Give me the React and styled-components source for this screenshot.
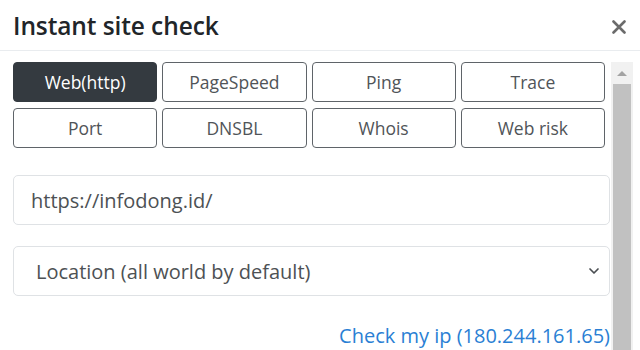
import styled, { createGlobalStyle } from 'styled-components'

const GlobalStyle = createGlobalStyle`
  html, body {
    margin: 0;
    padding: 0;
    background: #fff;
    overflow: hidden;
  }
  body {
    font-family: "Open Sans", "Noto Sans", Arial, sans-serif;
    color: #212529;
  }
`;

const Modal = styled.div`
  width: 640px;
  height: 350px;
  display: flex;
  flex-direction: column;
  overflow: hidden;
`;

const Header = styled.header`
  height: 50px;
  flex: none;
  display: flex;
  align-items: center;
  justify-content: space-between;
  padding: 0 13px 0 13px;
  border-bottom: 1px solid #e9ecef;
`;

const Title = styled.h1`
  margin: 0;
  font-size: 24.5px;
  font-weight: 600;
  color: #212529;
  letter-spacing: -0.1px;
`;

const Close = styled.button`
  border: 0;
  background: none;
  padding: 0;
  width: 16px;
  height: 16px;
  margin-top: 4px;
  display: flex;
  align-items: center;
  justify-content: center;
  cursor: pointer;
`;

const Body = styled.div`
  flex: 1;
  display: flex;
  padding-top: 11px;
  min-height: 0;
`;

const Content = styled.div`
  width: 610px;
  padding-left: 13px;
  box-sizing: border-box;
  display: flex;
  flex-direction: column;
`;

const Tabs = styled.div`
  display: grid;
  grid-template-columns: repeat(4, 1fr);
  column-gap: 5px;
  row-gap: 6px;
  width: 592px;
`;

const Tab = styled.button`
  height: 40px;
  border-radius: 4px;
  border: 1px solid ${({ $active }) => ($active ? '#343a40' : '#5f6469')};
  background: ${({ $active }) => ($active ? '#343a40' : '#fff')};
  color: ${({ $active }) => ($active ? '#fff' : '#505458')};
  font-family: inherit;
  font-size: 17.5px;
  padding: 0;
  cursor: pointer;
`;

const Field = styled.div`
  height: 50px;
  box-sizing: border-box;
  margin-top: ${({ $gap }) => $gap}px;
  border: 1px solid #dfe2e5;
  border-radius: 5px;
  display: flex;
  align-items: center;
  justify-content: space-between;
  padding: 0 8px 0 ${({ $pad }) => $pad}px;
  font-size: 20px;
  color: #4d5154;
`;

const Link = styled.a`
  align-self: flex-end;
  margin-top: 26px;
  font-size: 20px;
  color: #2a7fd4;
  text-decoration: none;
`;

const Scrollbar = styled.div`
  width: 22px;
  margin-left: 1px;
  background: #f1f1f1;
  display: flex;
  flex-direction: column;
  align-items: center;
`;

const ArrowUp = styled.div`
  height: 22px;
  display: flex;
  align-items: center;
  justify-content: center;
`;

const Thumb = styled.div`
  flex: 1;
  width: 18px;
  background: #c1c1c1;
`;

const tabs = ['Web(http)', 'PageSpeed', 'Ping', 'Trace', 'Port', 'DNSBL', 'Whois', 'Web risk'];

export default function App() {
  return (
    <Modal>
      <GlobalStyle />
      <Header>
        <Title>Instant site check</Title>
        <Close aria-label="Close">
          <svg width="14" height="14" viewBox="0 0 14 14">
            <path d="M1.5 1.5 L12.5 12.5 M12.5 1.5 L1.5 12.5" stroke="#6b6b6b" strokeWidth="2.6" strokeLinecap="round" />
          </svg>
        </Close>
      </Header>
      <Body>
        <Content>
          <Tabs>
            {tabs.map((t, i) => (
              <Tab key={t} $active={i === 0}>{t}</Tab>
            ))}
          </Tabs>
          <Field $gap={27} $pad={17}>https://infodong.id/</Field>
          <Field $gap={21} $pad={22}>
            Location (all world by default)
            <svg width="14" height="10" viewBox="0 0 14 10">
              <path d="M3 3 L7 7 L11 3" stroke="#4a4e52" strokeWidth="1.7" fill="none" strokeLinecap="round" strokeLinejoin="round" />
            </svg>
          </Field>
          <Link href="#">Check my ip (180.244.161.65)</Link>
        </Content>
        <Scrollbar>
          <ArrowUp>
            <svg width="10" height="6" viewBox="0 0 10 6">
              <path d="M0 6 L5 1 L10 6 Z" fill="#a3a3a3" />
            </svg>
          </ArrowUp>
          <Thumb />
        </Scrollbar>
      </Body>
    </Modal>
  );
}
